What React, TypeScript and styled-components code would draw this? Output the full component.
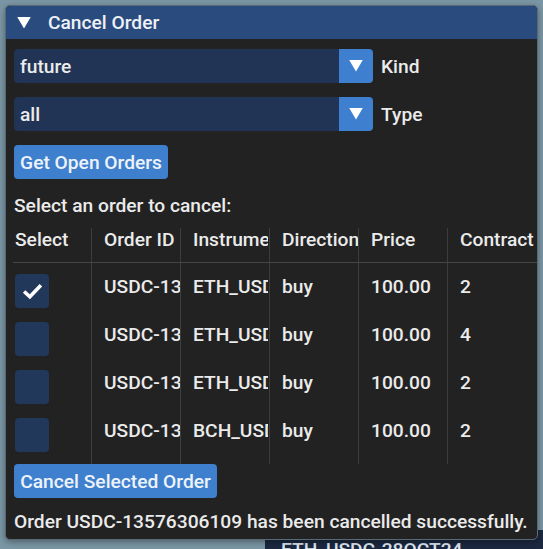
import React from "react";
import styled, { createGlobalStyle } from "styled-components";

const Global = createGlobalStyle`
  html, body { margin: 0; padding: 0; }
  body {
    background: #7a96a4;
    width: 543px;
    height: 549px;
    overflow: hidden;
    font-family: Roboto, "Liberation Sans", sans-serif;
    font-weight: 500;
    font-size: 19.2px;
    color: #ebebeb;
    position: relative;
  }
`;

const Desktop = styled.div`
  position: relative;
  width: 543px;
  height: 549px;
  padding: 5px 0 0 5px;
  box-sizing: border-box;
`;

const BackWindow = styled.div`
  position: absolute;
  left: 265px;
  top: 530px;
  width: 278px;
  height: 30px;
  background: #1b2840;
  padding: 9px 0 0 16px;
  box-sizing: border-box;
  color: #dfe6f0;
  line-height: 22px;
  white-space: nowrap;
`;

const Window = styled.div`
  position: relative;
  width: 533px;
  height: 535px;
  background: #222222;
  border: 1px solid #5a6a74;
  border-radius: 5px;
  box-sizing: border-box;
  overflow: hidden;
  display: flex;
  flex-direction: column;
  box-shadow: 0 2px 6px rgba(0, 0, 0, 0.35);
`;

const TitleBar = styled.div`
  height: 33px;
  background: #2a4b7e;
  display: flex;
  align-items: center;
  padding-left: 10px;
  gap: 16px;
  flex-shrink: 0;
`;

const Tri = styled.svg`
  display: block;
`;

const Title = styled.span`
  color: #eef1f6;
`;

const Body = styled.div`
  padding: 10px 0 0 8px;
  display: flex;
  flex-direction: column;
`;

const ComboRow = styled.div`
  display: flex;
  align-items: center;
  gap: 8px;
  height: 34px;
  margin-bottom: 14px;
`;

const Combo = styled.div`
  width: 359px;
  height: 34px;
  display: flex;
  border-radius: 4px;
  overflow: hidden;
`;

const ComboValue = styled.div`
  flex: 1;
  background: #213455;
  display: flex;
  align-items: center;
  padding-left: 6px;
`;

const ComboArrow = styled.div`
  width: 34px;
  background: #3f7fcf;
  display: flex;
  align-items: center;
  justify-content: center;
`;

const Button = styled.div<{ $w: number }>`
  width: ${(p) => p.$w}px;
  height: 34px;
  background: #3e80ce;
  border-radius: 4px;
  display: flex;
  align-items: center;
  justify-content: center;
  color: #eef3fa;
  white-space: nowrap;
`;

const Label = styled.div`
  height: 30px;
  display: flex;
  align-items: center;
  margin-top: 11px;
`;

const Table = styled.div`
  display: grid;
  grid-template-columns: 79px 89px 89px 89px 89px 90px;
  margin-left: -1px;
  margin-top: 8px;
  width: 530px;
  overflow: hidden;
`;

const HeadCell = styled.div<{ $first?: boolean; $last?: boolean }>`
  height: 35px;
  padding-top: 1px;
  box-sizing: border-box;
  line-height: 22px;
  padding-left: ${(p) => (p.$first ? 2 : 12)}px;
  border-bottom: 1px solid #464646;
  border-right: ${(p) => (p.$last ? "none" : "1px solid #3d3d3d")};
  white-space: nowrap;
  overflow: hidden;
`;

const Clip = styled.span<{ $w: number }>`
  display: block;
  max-width: ${(p) => p.$w}px;
  overflow: hidden;
  white-space: nowrap;
`;

const Cell = styled.div<{ $last?: boolean; $pad?: number; $h?: number }>`
  height: ${(p) => p.$h ?? 47.75}px;
  display: flex;
  align-items: center;
  padding-left: ${(p) => p.$pad ?? 12}px;
  border-right: ${(p) => (p.$last ? "none" : "1px solid #3d3d3d")};
  white-space: nowrap;
  overflow: hidden;
  box-sizing: border-box;
`;

const Check = styled.div`
  width: 34px;
  height: 34px;
  margin-top: 9px;
  background: #22385a;
  border-radius: 4px;
  display: flex;
  align-items: center;
  justify-content: center;
`;

const Message = styled.div`
  margin-top: 12px;
  white-space: nowrap;
`;

const Arrow = ({ size = 14 }: { size?: number }) => (
  <Tri viewBox="0 0 16 14" width={size} height={size * 0.85}>
    <polygon points="1,1 15,1 8,13" fill="#ffffff" />
  </Tri>
);

const rows = [
  { checked: true, id: "USDC-13", inst: "ETH_USDC", dir: "buy", price: "100.00", c: "2" },
  { checked: false, id: "USDC-13", inst: "ETH_USDC", dir: "buy", price: "100.00", c: "4" },
  { checked: false, id: "USDC-13", inst: "ETH_USDC", dir: "buy", price: "100.00", c: "2" },
  { checked: false, id: "USDC-13", inst: "BCH_USDC", dir: "buy", price: "100.00", c: "2" },
];

const headers = ["Select", "Order ID", "Instrument", "Direction", "Price", "Contracts"];
const clipW = [70, 76, 75, 76, 76, 74];

export default function App() {
  return (
    <>
      <Global />
      <Desktop>
        <BackWindow>ETH_USDC-28OCT24</BackWindow>
        <Window>
          <TitleBar>
            <Arrow size={16} />
            <Title>Cancel Order</Title>
          </TitleBar>
          <Body>
            <ComboRow>
              <Combo>
                <ComboValue>future</ComboValue>
                <ComboArrow>
                  <Arrow size={16} />
                </ComboArrow>
              </Combo>
              <span>Kind</span>
            </ComboRow>
            <ComboRow>
              <Combo>
                <ComboValue>all</ComboValue>
                <ComboArrow>
                  <Arrow size={16} />
                </ComboArrow>
              </Combo>
              <span>Type</span>
            </ComboRow>
            <Button $w={154}>Get Open Orders</Button>
            <Label>Select an order to cancel:</Label>
            <Table>
              {headers.map((h, i) => (
                <HeadCell key={h} $first={i === 0} $last={i === headers.length - 1}>
                  <Clip $w={clipW[i]}>{h}</Clip>
                </HeadCell>
              ))}
              {rows.map((r, i) => (
                <React.Fragment key={i}>
                  <Cell $pad={2}>
                    <Check>
                      {r.checked && (
                        <svg width="21" height="17" viewBox="0 0 20 16">
                          <polyline
                            points="2,8 7.5,13 18,2"
                            fill="none"
                            stroke="#ffffff"
                            strokeWidth="3.4"
                          />
                        </svg>
                      )}
                    </Check>
                  </Cell>
                  <Cell><Clip $w={clipW[1]}>{r.id}</Clip></Cell>
                  <Cell><Clip $w={clipW[2]}>{r.inst}</Clip></Cell>
                  <Cell><Clip $w={clipW[3]}>{r.dir}</Clip></Cell>
                  <Cell><Clip $w={clipW[4]}>{r.price}</Clip></Cell>
                  <Cell $last><Clip $w={clipW[5]}>{r.c}</Clip></Cell>
                </React.Fragment>
              ))}
              {headers.map((h, i) => (
                <Cell key={"s" + h} $h={10} $last={i === headers.length - 1} />
              ))}
            </Table>
            <Button $w={203}>Cancel Selected Order</Button>
            <Message>Order USDC-13576306109 has been cancelled successfully.</Message>
          </Body>
        </Window>
      </Desktop>
    </>
  );
}
